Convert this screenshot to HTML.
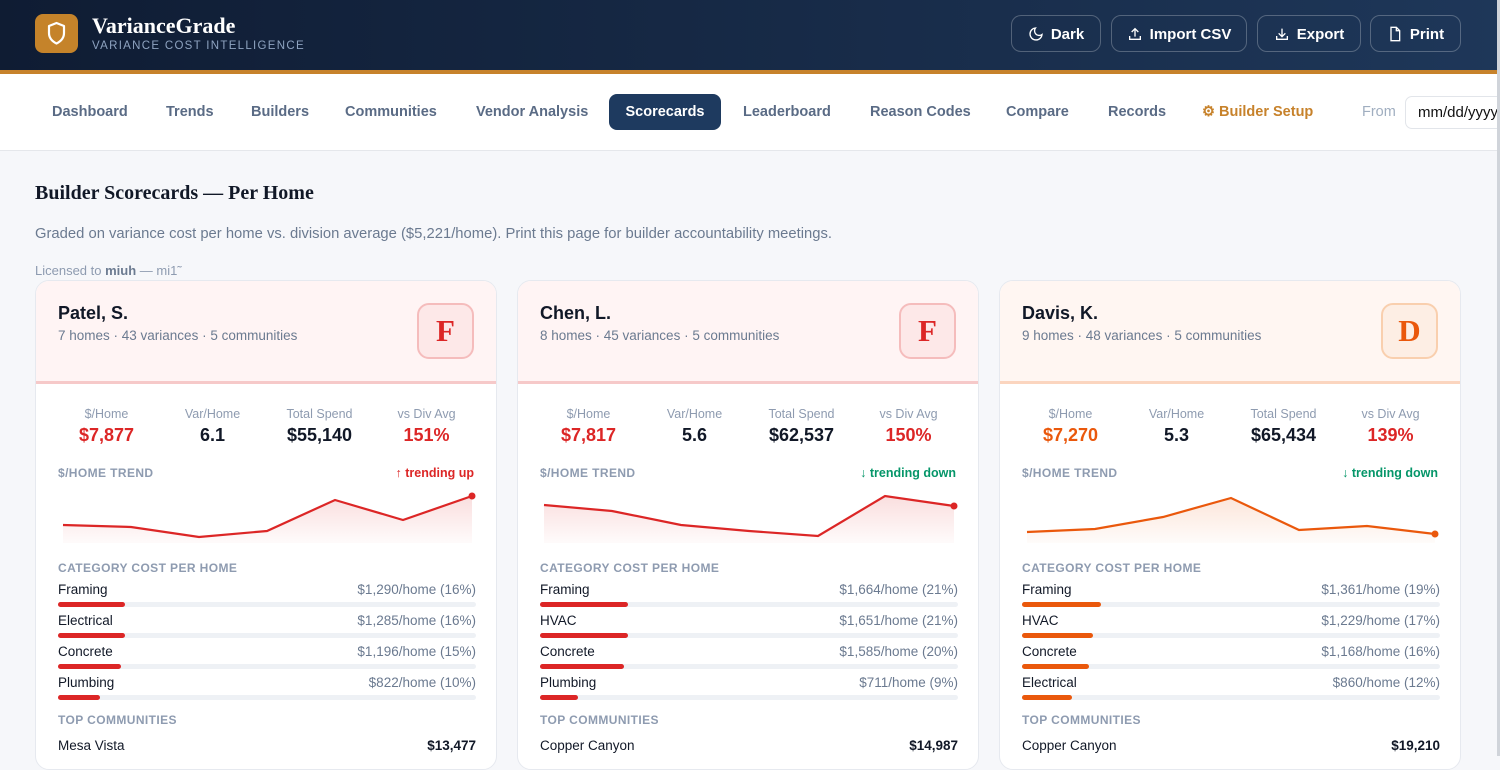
<!DOCTYPE html>
<html><head><meta charset="utf-8"><style>
*{box-sizing:border-box;margin:0;padding:0}
body{width:1500px;height:756px;overflow:hidden;background:#f6f7fa;font-family:"Liberation Sans",sans-serif;color:#111827;position:relative}
.hdr{position:absolute;left:0;top:0;width:1500px;height:74px;background:linear-gradient(90deg,#0f1c33,#1e3759);border-bottom:4px solid #c7822b}
.logo{position:absolute;left:35px;top:14px;width:43px;height:39px;background:#c5832a;border-radius:8px}
.brand{position:absolute;left:92px;top:13px;font-family:"Liberation Serif",serif;font-weight:bold;font-size:22px;color:#fff}
.sub{position:absolute;left:92px;top:40px;font-size:11.5px;letter-spacing:1.3px;color:#8ea3c0}
.btn{position:absolute;top:15px;height:37px;border:1px solid rgba(255,255,255,.25);border-radius:10px;color:#fff;font-weight:bold;font-size:15px;display:flex;align-items:center;justify-content:center;gap:7px;padding-top:1px}
.nav{position:absolute;left:0;top:74px;width:1500px;height:77px;background:#fff;border-bottom:1px solid #e5e7eb}
.ni{position:absolute;top:30px;font-size:14.5px;font-weight:bold;color:#5a6b85}
.act{position:absolute;left:609px;top:20px;width:112px;height:36px;background:#1e3a5f;border-radius:8px;color:#fff;font-weight:bold;font-size:14.5px;text-align:center;line-height:37px}
.date{position:absolute;left:1405px;top:22px;width:110px;height:33px;border:1px solid #e2e5ea;border-radius:7px;font-size:15px;padding:7px 0 0 12px;color:#111}
h1{position:absolute;left:35px;top:182px;font-family:"Liberation Serif",serif;font-size:20px;font-weight:bold;color:#111827}
.desc{position:absolute;left:35px;top:226px;font-size:14.8px;color:#6b7a90}
.lic{position:absolute;left:35px;top:263px;font-size:13px;color:#8e9bb0}
.card{position:absolute;top:280px;width:462px;height:490px;background:#fff;border:1px solid #e6e9ef;border-radius:14px;overflow:hidden}
.ch{height:103px;border-bottom:3px solid #f6c9c9;background:#fff4f4;position:relative}
.name{position:absolute;left:22px;top:22px;font-size:18px;font-weight:bold;color:#111827}
.meta{position:absolute;left:22px;top:47px;font-size:13.5px;color:#6b7a90}
.grade{position:absolute;right:22px;top:22px;width:57px;height:56px;border:2px solid #f5bcbc;background:#fde8e8;border-radius:12px;font-family:"Liberation Serif",serif;font-weight:bold;font-size:31px;text-align:center;line-height:52px;color:#dc2626}
.stat{position:absolute;top:126px;width:107px;text-align:center}
.sl{font-size:12.5px;color:#8e9bb0}
.sv{font-size:18px;font-weight:bold;margin-top:4px}
.lbl{position:absolute;left:22px;font-size:12px;font-weight:bold;color:#8e9bb0;letter-spacing:.4px}
.trend{position:absolute;right:22px;top:185px;font-size:12.5px;font-weight:bold}
.row{position:absolute;left:22px;width:418px;font-size:13.5px}
.row .v{position:absolute;right:0;top:0;color:#6b7a90}
.trk{position:absolute;left:0;top:20px;width:418px;height:5px;border-radius:3px;background:#eef1f5}
.fill{height:5px;border-radius:3px}
.com{position:absolute;left:22px;top:457px;width:418px;font-size:13.5px}
.com b{position:absolute;right:0;top:0}
.red{color:#dc2626}.org{color:#ea580c}.grn{color:#059669}
</style></head><body>
<div class="hdr">
<div class="logo"><svg width="43" height="39" viewBox="0 0 43 39"><path d="M21.5 9 L29 12 V19 C29 24 25.5 27.5 21.5 29.5 C17.5 27.5 14 24 14 19 V12 Z" fill="none" stroke="#fff" stroke-width="2.2" stroke-linejoin="round"/></svg></div>
<div class="brand">VarianceGrade</div>
<div class="sub">VARIANCE COST INTELLIGENCE</div>
<div class="btn" style="left:1011px;width:90px"><svg width="16" height="16" viewBox="0 0 24 24" fill="none" stroke="#fff" stroke-width="2"><path d="M21 12.8A9 9 0 1 1 11.2 3a7 7 0 0 0 9.8 9.8z"/></svg>Dark</div>
<div class="btn" style="left:1111px;width:136px"><svg width="16" height="16" viewBox="0 0 24 24" fill="none" stroke="#fff" stroke-width="2"><path d="M4 15v5h16v-5M12 16V4M7 9l5-5 5 5"/></svg>Import CSV</div>
<div class="btn" style="left:1257px;width:104px"><svg width="16" height="16" viewBox="0 0 24 24" fill="none" stroke="#fff" stroke-width="2"><path d="M4 15v5h16v-5M12 4v12M7 11l5 5 5-5"/></svg>Export</div>
<div class="btn" style="left:1370px;width:91px"><svg width="16" height="16" viewBox="0 0 24 24" fill="none" stroke="#fff" stroke-width="2"><path d="M6 2h8l5 5v15H6zM14 2v5h5"/></svg>Print</div>
</div>
<div class="nav">
<div class="ni" style="left:52px">Dashboard</div>
<div class="ni" style="left:166px">Trends</div>
<div class="ni" style="left:251px">Builders</div>
<div class="ni" style="left:345px">Communities</div>
<div class="ni" style="left:476px">Vendor Analysis</div>
<div class="act">Scorecards</div>
<div class="ni" style="left:743px">Leaderboard</div>
<div class="ni" style="left:870px">Reason Codes</div>
<div class="ni" style="left:1006px">Compare</div>
<div class="ni" style="left:1108px">Records</div>
<div class="ni" style="left:1202px;color:#c7822b">⚙ Builder Setup</div>
<div class="ni" style="left:1362px;color:#a0aec0;font-weight:normal">From</div>
<div class="date">mm/dd/yyyy</div>
</div>
<h1>Builder Scorecards — Per Home</h1>
<div class="desc">Graded on variance cost per home vs. division average ($5,221/home). Print this page for builder accountability meetings.</div>
<div class="lic">Licensed to <b style="color:#6b7a90">miuh</b> — mi1˜</div>

<!-- Card 1 -->
<div class="card" style="left:35px">
<div class="ch"><div class="name">Patel, S.</div><div class="meta">7 homes · 43 variances · 5 communities</div><div class="grade">F</div></div>
<div class="stat" style="left:17px"><div class="sl">$/Home</div><div class="sv red">$7,877</div></div>
<div class="stat" style="left:123px"><div class="sl">Var/Home</div><div class="sv">6.1</div></div>
<div class="stat" style="left:230px"><div class="sl">Total Spend</div><div class="sv">$55,140</div></div>
<div class="stat" style="left:337px"><div class="sl">vs Div Avg</div><div class="sv red">151%</div></div>
<div class="lbl" style="top:185px">$/HOME TREND</div><div class="trend red">↑ trending up</div>
<svg style="position:absolute;left:0;top:200px" width="462" height="70"><defs><linearGradient id="g1" x1="0" y1="0" x2="0" y2="1"><stop offset="0" stop-color="#dc2626" stop-opacity=".15"/><stop offset="1" stop-color="#dc2626" stop-opacity=".02"/></linearGradient></defs>
<path d="M27 44 L95 46 L163 56 L231 50 L299 19 L367 39 L436 15 L436 62 L27 62Z" fill="url(#g1)"/>
<path d="M27 44 L95 46 L163 56 L231 50 L299 19 L367 39 L436 15" fill="none" stroke="#dc2626" stroke-width="2.2"/><circle cx="436" cy="15" r="3.5" fill="#dc2626"/></svg>
<div class="lbl" style="top:280px">CATEGORY COST PER HOME</div>
<div class="row" style="top:301px">Framing<span class="v">$1,290/home (16%)</span><div class="trk"><div class="fill" style="width:16%;background:#dc2626"></div></div></div>
<div class="row" style="top:332px">Electrical<span class="v">$1,285/home (16%)</span><div class="trk"><div class="fill" style="width:16%;background:#dc2626"></div></div></div>
<div class="row" style="top:363px">Concrete<span class="v">$1,196/home (15%)</span><div class="trk"><div class="fill" style="width:15%;background:#dc2626"></div></div></div>
<div class="row" style="top:394px">Plumbing<span class="v">$822/home (10%)</span><div class="trk"><div class="fill" style="width:10%;background:#dc2626"></div></div></div>
<div class="lbl" style="top:432px">TOP COMMUNITIES</div>
<div class="com">Mesa Vista<b>$13,477</b></div>
</div>

<!-- Card 2 -->
<div class="card" style="left:517px">
<div class="ch"><div class="name">Chen, L.</div><div class="meta">8 homes · 45 variances · 5 communities</div><div class="grade">F</div></div>
<div class="stat" style="left:17px"><div class="sl">$/Home</div><div class="sv red">$7,817</div></div>
<div class="stat" style="left:123px"><div class="sl">Var/Home</div><div class="sv">5.6</div></div>
<div class="stat" style="left:230px"><div class="sl">Total Spend</div><div class="sv">$62,537</div></div>
<div class="stat" style="left:337px"><div class="sl">vs Div Avg</div><div class="sv red">150%</div></div>
<div class="lbl" style="top:185px">$/HOME TREND</div><div class="trend grn">↓ trending down</div>
<svg style="position:absolute;left:0;top:200px" width="462" height="70">
<path d="M26 24 L94 30 L163 44 L231 50 L300 55 L367 15 L436 25 L436 62 L26 62Z" fill="url(#g1)"/>
<path d="M26 24 L94 30 L163 44 L231 50 L300 55 L367 15 L436 25" fill="none" stroke="#dc2626" stroke-width="2.2"/><circle cx="436" cy="25" r="3.5" fill="#dc2626"/></svg>
<div class="lbl" style="top:280px">CATEGORY COST PER HOME</div>
<div class="row" style="top:301px">Framing<span class="v">$1,664/home (21%)</span><div class="trk"><div class="fill" style="width:21%;background:#dc2626"></div></div></div>
<div class="row" style="top:332px">HVAC<span class="v">$1,651/home (21%)</span><div class="trk"><div class="fill" style="width:21%;background:#dc2626"></div></div></div>
<div class="row" style="top:363px">Concrete<span class="v">$1,585/home (20%)</span><div class="trk"><div class="fill" style="width:20%;background:#dc2626"></div></div></div>
<div class="row" style="top:394px">Plumbing<span class="v">$711/home (9%)</span><div class="trk"><div class="fill" style="width:9%;background:#dc2626"></div></div></div>
<div class="lbl" style="top:432px">TOP COMMUNITIES</div>
<div class="com">Copper Canyon<b>$14,987</b></div>
</div>

<!-- Card 3 -->
<div class="card" style="left:999px">
<div class="ch" style="background:#fff6f2;border-bottom-color:#fbd5bf"><div class="name">Davis, K.</div><div class="meta">9 homes · 48 variances · 5 communities</div><div class="grade" style="color:#ea580c;background:#fdeee4;border-color:#f9cfae">D</div></div>
<div class="stat" style="left:17px"><div class="sl">$/Home</div><div class="sv org">$7,270</div></div>
<div class="stat" style="left:123px"><div class="sl">Var/Home</div><div class="sv">5.3</div></div>
<div class="stat" style="left:230px"><div class="sl">Total Spend</div><div class="sv">$65,434</div></div>
<div class="stat" style="left:337px"><div class="sl">vs Div Avg</div><div class="sv red">139%</div></div>
<div class="lbl" style="top:185px">$/HOME TREND</div><div class="trend grn">↓ trending down</div>
<svg style="position:absolute;left:0;top:200px" width="462" height="70"><defs><linearGradient id="g3" x1="0" y1="0" x2="0" y2="1"><stop offset="0" stop-color="#ea580c" stop-opacity=".15"/><stop offset="1" stop-color="#ea580c" stop-opacity=".02"/></linearGradient></defs>
<path d="M27 51 L95 48 L163 36 L231 17 L299 49 L367 45 L435 53 L435 62 L27 62Z" fill="url(#g3)"/>
<path d="M27 51 L95 48 L163 36 L231 17 L299 49 L367 45 L435 53" fill="none" stroke="#ea580c" stroke-width="2.2"/><circle cx="435" cy="53" r="3.5" fill="#ea580c"/></svg>
<div class="lbl" style="top:280px">CATEGORY COST PER HOME</div>
<div class="row" style="top:301px">Framing<span class="v">$1,361/home (19%)</span><div class="trk"><div class="fill" style="width:19%;background:#ea580c"></div></div></div>
<div class="row" style="top:332px">HVAC<span class="v">$1,229/home (17%)</span><div class="trk"><div class="fill" style="width:17%;background:#ea580c"></div></div></div>
<div class="row" style="top:363px">Concrete<span class="v">$1,168/home (16%)</span><div class="trk"><div class="fill" style="width:16%;background:#ea580c"></div></div></div>
<div class="row" style="top:394px">Electrical<span class="v">$860/home (12%)</span><div class="trk"><div class="fill" style="width:12%;background:#ea580c"></div></div></div>
<div class="lbl" style="top:432px">TOP COMMUNITIES</div>
<div class="com">Copper Canyon<b>$19,210</b></div>
</div>
<div style="position:absolute;left:1497px;top:0;width:3px;height:756px;background:#d0d4da"></div>
</body></html>
